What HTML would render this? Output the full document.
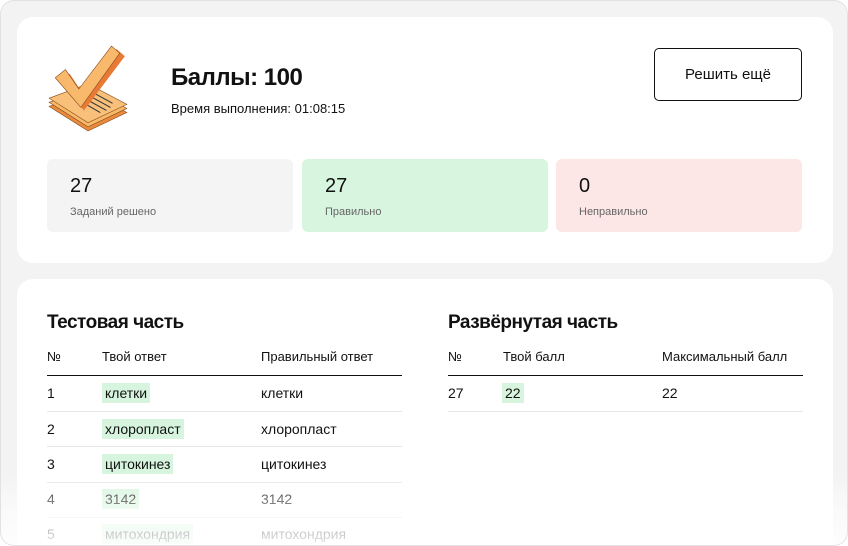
<!DOCTYPE html>
<html><head><meta charset="utf-8">
<style>
*{box-sizing:border-box;margin:0;padding:0}
body{width:848px;height:546px;overflow:hidden;background:#fff;font-family:"Liberation Sans",sans-serif;color:#111}
.frame{position:absolute;left:0;top:0;width:848px;height:546px;background:#f3f3f3;border:1px solid #e2e2e2;border-radius:14px;overflow:hidden}
.card{position:absolute;background:#fff;border-radius:16px}
.c1{left:16px;top:16px;width:816px;height:246px}
.c2{left:16px;top:278px;width:816px;height:280px}
.t{position:absolute;white-space:nowrap}
.btn{position:absolute;left:637px;top:31px;width:148px;height:53px;border:1px solid #111;border-radius:5px;font-size:15px;display:flex;align-items:center;justify-content:center}
.stat{position:absolute;top:142px;width:246px;height:73px;border-radius:6px}
.stat .n{position:absolute;left:23px;top:16px;font-size:20px}
.stat .l{position:absolute;left:23px;top:47px;font-size:11px;color:#666}
.line{position:absolute;height:1px;background:#e6e6e6}
.hl{background:#d7f5de;padding:2px 3px;margin-left:-3px}
.r{font-size:14px}
.h{font-weight:bold;letter-spacing:-0.5px}
.fade{position:absolute;left:0;top:470px;width:848px;height:76px;background:linear-gradient(rgba(255,255,255,0),rgba(255,255,255,.55) 50%,rgba(255,255,255,.9))}
</style></head><body>
<div class="frame">
<div class="card c1">
<svg style="position:absolute;left:30px;top:28px" width="82" height="88" viewBox="0 0 80 86">
<polygon points="2,60 40,46 78,66 40,84" fill="#e98b3e" stroke="#8a4a1a" stroke-width=".6"/>
<polygon points="2,56 40,42 78,62 40,80" fill="#f7b96a" stroke="#8a4a1a" stroke-width=".6"/>
<polygon points="2,52 40,38 78,58 40,76" fill="#f8c07a" stroke="#8a4a1a" stroke-width=".6"/>
<g stroke="#333" stroke-width="1"><line x1="44" y1="46" x2="64" y2="57"/><line x1="42" y1="50" x2="62" y2="61"/><line x1="40" y1="54" x2="58" y2="64"/><line x1="38" y1="58" x2="52" y2="66"/></g>
<path d="M14,36 L22,28 L34,46 L68,4 L76,11 L36,64 Z" fill="#e97a35"/>
<path d="M8,32 L18,24 L31,43 L63,1 L71,8 L33,61 Z" fill="#f8b96c" stroke="#8a4a1a" stroke-width=".6"/>
</svg>
<div class="t h" style="left:154px;top:47px;font-size:24px">Баллы: 100</div>
<div class="t" style="left:154px;top:84px;font-size:13px">Время выполнения: 01:08:15</div>
<div class="btn">Решить ещё</div>
<div class="stat" style="left:30px;background:#f4f4f4"><div class="n">27</div><div class="l">Заданий решено</div></div>
<div class="stat" style="left:285px;background:#d8f5df"><div class="n">27</div><div class="l">Правильно</div></div>
<div class="stat" style="left:539px;background:#fde6e6"><div class="n">0</div><div class="l">Неправильно</div></div>
</div>
<div class="card c2">
<div class="t h" style="left:30px;top:33px;font-size:19px">Тестовая часть</div>
<div class="t h" style="left:431px;top:33px;font-size:19px">Развёрнутая часть</div>
<div class="t r" style="left:30px;top:70px;font-size:13px">№</div>
<div class="t r" style="left:85px;top:70px;font-size:13px">Твой ответ</div>
<div class="t r" style="left:244px;top:70px;font-size:13px">Правильный ответ</div>
<div class="line" style="left:30px;top:96px;width:355px;background:#111"></div>
<div class="t r" style="left:431px;top:70px;font-size:13px">№</div>
<div class="t r" style="left:486px;top:70px;font-size:13px">Твой балл</div>
<div class="t r" style="left:645px;top:70px;font-size:13px">Максимальный балл</div>
<div class="line" style="left:431px;top:96px;width:355px;background:#111"></div>
<div class="t r" style="left:30px;top:106px">1</div><div class="t r" style="left:88px;top:106px"><span class="hl">клетки</span></div><div class="t r" style="left:244px;top:106px">клетки</div>
<div class="line" style="left:30px;top:132px;width:355px"></div>
<div class="t r" style="left:30px;top:142px">2</div><div class="t r" style="left:88px;top:142px"><span class="hl">хлоропласт</span></div><div class="t r" style="left:244px;top:142px">хлоропласт</div>
<div class="line" style="left:30px;top:167px;width:355px"></div>
<div class="t r" style="left:30px;top:177px">3</div><div class="t r" style="left:88px;top:177px"><span class="hl">цитокинез</span></div><div class="t r" style="left:244px;top:177px">цитокинез</div>
<div class="line" style="left:30px;top:203px;width:355px"></div>
<div class="t r" style="left:30px;top:212px">4</div><div class="t r" style="left:88px;top:212px"><span class="hl">3142</span></div><div class="t r" style="left:244px;top:212px">3142</div>
<div class="line" style="left:30px;top:238px;width:355px"></div>
<div class="t r" style="left:30px;top:247px">5</div><div class="t r" style="left:88px;top:247px"><span class="hl">митохондрия</span></div><div class="t r" style="left:244px;top:247px">митохондрия</div>
<div class="t r" style="left:431px;top:106px">27</div><div class="t r" style="left:488px;top:106px"><span class="hl">22</span></div><div class="t r" style="left:645px;top:106px">22</div>
<div class="line" style="left:431px;top:132px;width:355px"></div>
</div>
<div class="fade"></div>
</div>
</body></html>
